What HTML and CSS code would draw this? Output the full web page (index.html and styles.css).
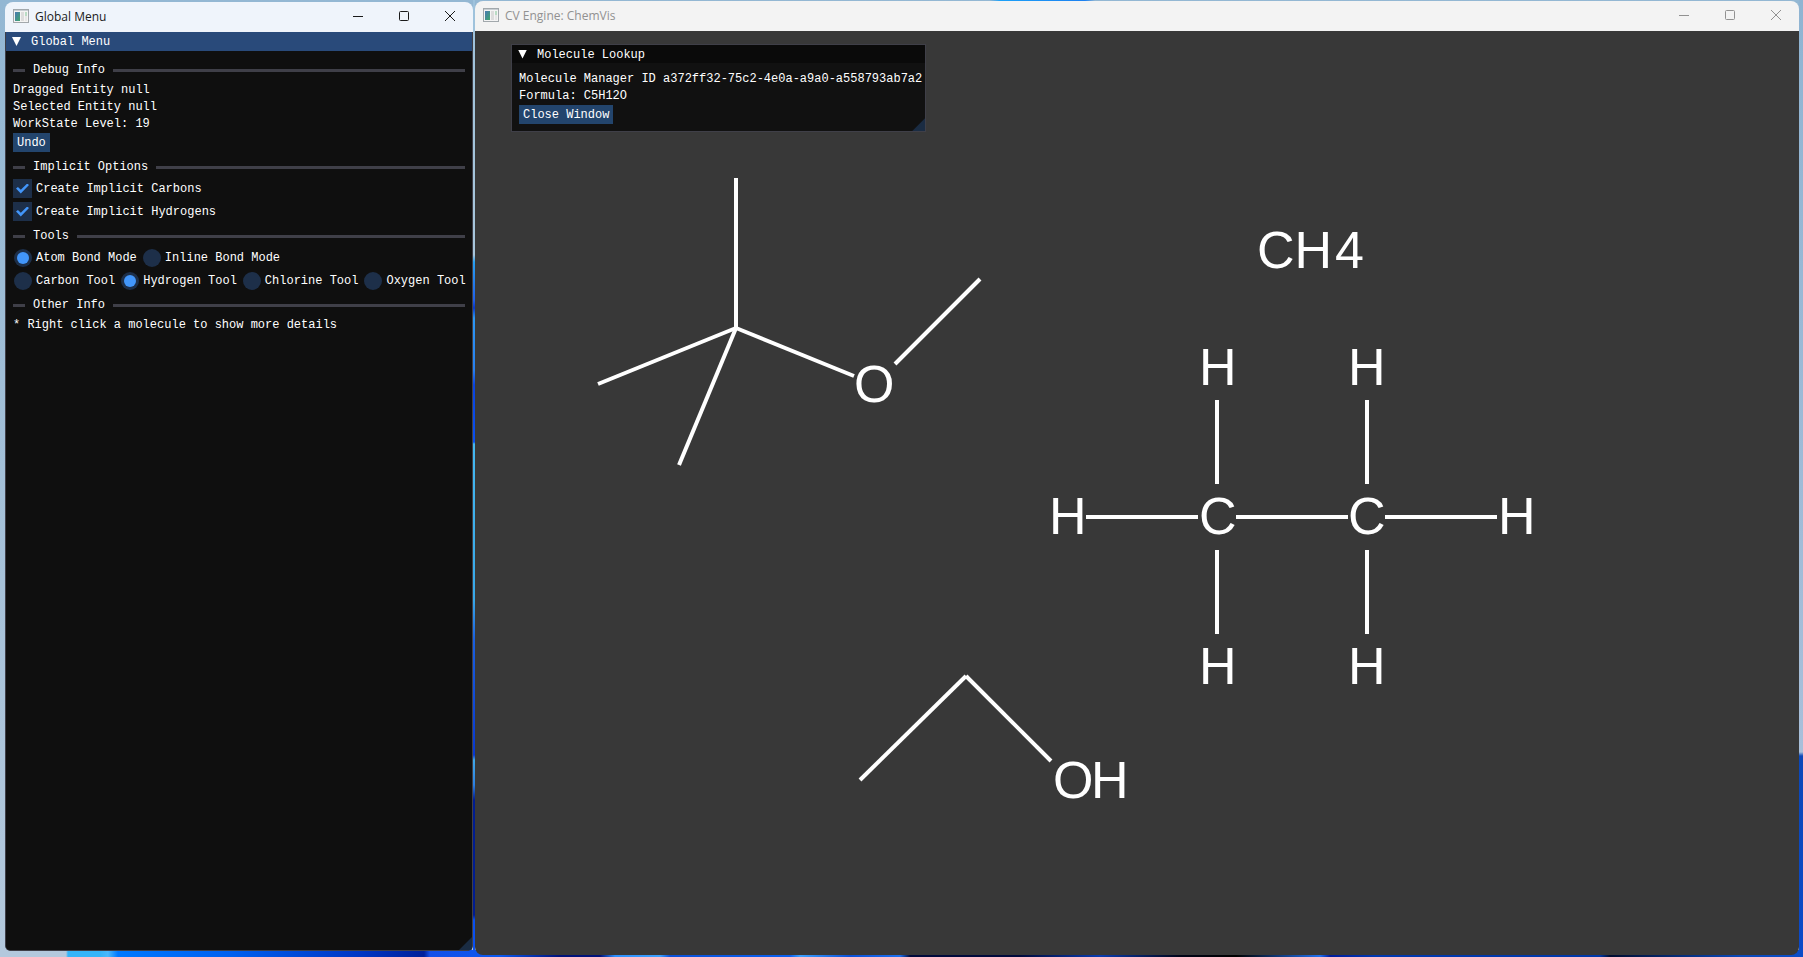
FILE: index.html
```html
<!DOCTYPE html>
<html lang="en">
<head>
<meta charset="utf-8">
<title>CV Engine: ChemVis</title>
<link rel="stylesheet" href="styles.css">
</head>
<body>
<svg width="0" height="0" class="defs" aria-hidden="true">
  <defs>
    <linearGradient id="pane" x1="0" y1="0" x2="1" y2="1">
      <stop offset="0" stop-color="#4a78b4"/><stop offset="1" stop-color="#3fa56c"/>
    </linearGradient>
    <symbol id="app" viewBox="0 0 16 14">
      <rect x="0.5" y="0.5" width="15" height="13" fill="#f4f4f4" stroke="#a2a8ac"/>
      <rect x="1" y="1" width="14" height="1" fill="#c9cfd3"/>
      <rect x="2" y="3" width="5" height="9" fill="url(#pane)"/>
      <rect x="8" y="3" width="3" height="9" fill="#dcdcdc"/>
      <rect x="12" y="3" width="2" height="4" fill="#b9dcc4"/>
      <rect x="12" y="7" width="2" height="5" fill="#e6e6e6"/>
    </symbol>
    <symbol id="min" viewBox="0 0 10 10"><path d="M0 5.5H10" stroke="currentColor"/></symbol>
    <symbol id="max" viewBox="0 0 10 10"><rect x="0.5" y="0.5" width="9" height="9" rx="1" fill="none" stroke="currentColor"/></symbol>
    <symbol id="close" viewBox="0 0 10 10"><path d="M0 0L10 10M10 0L0 10" stroke="currentColor"/></symbol>
  </defs>
</svg>

<main class="desktop">
  <section class="window window-menu">
    <header class="titlebar">
      <svg class="app-icon"><use href="#app"/></svg>
      <h1 class="caption">Global Menu</h1>
      <div class="controls">
        <button class="control" aria-label="Minimize"><svg class="glyph"><use href="#min"/></svg></button>
        <button class="control" aria-label="Maximize"><svg class="glyph"><use href="#max"/></svg></button>
        <button class="control" aria-label="Close"><svg class="glyph"><use href="#close"/></svg></button>
      </div>
    </header>
    <div class="panel panel-menu">
      <button class="panel-head"><span class="arrow"></span>Global Menu</button>
      <div class="panel-body">
        <h2 class="divider">Debug Info</h2>
        <p class="line">Dragged Entity null</p>
        <p class="line">Selected Entity null</p>
        <p class="line">WorkState Level: 19</p>
        <button class="action">Undo</button>

        <h2 class="divider">Implicit Options</h2>
        <label class="option"><input class="check" type="checkbox" checked>Create Implicit Carbons</label>
        <label class="option"><input class="check" type="checkbox" checked>Create Implicit Hydrogens</label>

        <h2 class="divider">Tools</h2>
        <div class="options">
          <label class="option"><input class="radio" type="radio" name="mode" checked>Atom Bond Mode</label>
          <label class="option"><input class="radio" type="radio" name="mode">Inline Bond Mode</label>
        </div>
        <div class="options">
          <label class="option"><input class="radio" type="radio" name="tool">Carbon Tool</label>
          <label class="option"><input class="radio" type="radio" name="tool" checked>Hydrogen Tool</label>
          <label class="option"><input class="radio" type="radio" name="tool">Chlorine Tool</label>
          <label class="option"><input class="radio" type="radio" name="tool">Oxygen Tool</label>
        </div>

        <h2 class="divider">Other Info</h2>
        <p class="line">* Right click a molecule to show more details</p>
      </div>
      <span class="grip"></span>
    </div>
  </section>

  <section class="window window-view">
    <header class="titlebar inactive">
      <svg class="app-icon"><use href="#app"/></svg>
      <h1 class="caption">CV Engine: ChemVis</h1>
      <div class="controls">
        <button class="control" aria-label="Minimize"><svg class="glyph"><use href="#min"/></svg></button>
        <button class="control" aria-label="Maximize"><svg class="glyph"><use href="#max"/></svg></button>
        <button class="control" aria-label="Close"><svg class="glyph"><use href="#close"/></svg></button>
      </div>
    </header>
    <div class="viewport">
      <svg class="scene" viewBox="0 0 1324 924">
        <g class="bonds">
          <path d="M261 147V297"/>
          <path d="M261 297L123 353"/>
          <path d="M261 297L204 434"/>
          <path d="M261 297L379 345"/>
          <path d="M420 333L505 248"/>
          <path d="M385 749L491 645"/>
          <path d="M491 645L576 730"/>
          <path d="M742 369V453"/>
          <path d="M892 369V453"/>
          <path d="M742 519V603"/>
          <path d="M892 519V603"/>
          <path d="M611 486H723"/>
          <path d="M761 486H873"/>
          <path d="M910 486H1022"/>
        </g>
        <g class="atoms">
          <text x="379" y="371">O</text>
          <text x="782" y="237">CH<tspan x="860">4</tspan></text>
          <text x="724" y="354">H</text>
          <text x="873" y="354">H</text>
          <text x="574" y="503">H</text>
          <text x="724" y="503">C</text>
          <text x="873" y="503">C</text>
          <text x="1023" y="503">H</text>
          <text x="724" y="653">H</text>
          <text x="873" y="653">H</text>
          <text x="578" y="767">O<tspan x="616">H</tspan></text>
        </g>
      </svg>
      <div class="panel panel-lookup">
        <button class="panel-head"><span class="arrow"></span>Molecule Lookup</button>
        <div class="panel-body">
          <p class="line">Molecule Manager ID a372ff32-75c2-4e0a-a9a0-a558793ab7a2</p>
          <p class="line">Formula: C5H12O</p>
          <button class="action">Close Window</button>
        </div>
        <span class="grip"></span>
      </div>
    </div>
  </section>
</main>
</body>
</html>
```
FILE: styles.css
```css
* { box-sizing: border-box; }

body {
  margin: 0;
  font: 12px/13px "Liberation Mono", monospace;
  color: #fff;
}

.defs { position: absolute; }

h1, h2, p { margin: 0; font: inherit; }

button {
  border: 0;
  font: inherit;
  color: inherit;
  cursor: pointer;
}

/* Desktop and wallpaper */
.desktop {
  display: grid;
  grid-template-columns: minmax(0, 117fr) minmax(0, 331fr);
  gap: 2px;
  min-height: 100vh;
  padding: 1px 4px 2px 5px;
  background:
    linear-gradient(90deg, #b3c8dd 0 66px, #35b4f8 68px 100px, #4ab8fc 108px, #0078ff 118px, #0060f0 230px, #0036c4 360px, #00209a 424px, #1450e8 430px, #0a58f0 500px, #00127a 560px, #00127a 600px, #2c90ff 615px, #3ca0ff 660px, #0a50d8 670px, #0a60f0 790px, #3ca0ff 800px, #0a50d8 850px, #1c70f0 900px, #000a3c 910px, #000a3c 1020px, #0a3cb0 1100px, #000418 1180px, #000 1236px, #2070f0 1320px, #001c9c 1330px, #0038b0 1375px, #0038a8 1600px, #000c30 1610px, #0a48b8 1740px, #0a4cc8) left bottom / 100% 7px no-repeat,
    linear-gradient(90deg, transparent 990px, #1ca0f8 1000px, #1c80f0 1085px, transparent 1095px) left top / 100% 1px no-repeat,
    linear-gradient(180deg, #8fb4d2 0, #a8bfda 752px, #0c48b8 756px, #0c4ac8 100%) right top / 4px 100% no-repeat,
    linear-gradient(180deg, #9ec2dc 0, #a8c6dc 255px, #28a0f0 262px, #2060e8 300px, #0838c8 308px, #2c98f4 318px, #2880f0 370px, #0a44e0 385px, #0a50f0 442px, #44b8f0 444px, #38a8e8 600px, #1a60e0 640px, #0838d0 755px, #40a8e8 760px, #2c80e0 785px, #001c90 800px, #001c90 915px, #0a50f0 920px) 473px 0 / 2px 100% no-repeat,
    linear-gradient(180deg, #93b7d3, #b4c9dd);
}

/* Native window frame */
.window {
  display: flex;
  flex-direction: column;
  overflow: hidden;
  border-radius: 8px;
}

.window-menu { margin: 1px 0 4px; border-radius: 8px 8px 5px 5px; }

.titlebar {
  display: flex;
  align-items: center;
  gap: 6px;
  height: 30px;
  padding: 0 0 2px 8px;
  background: #eff4fb;
  color: #1a1a1a;
}

.titlebar.inactive { background: #f3f3f3; color: #919191; }

.app-icon { width: 16px; height: 14px; }

.caption {
  flex: 1;
  padding-top: 2px;
  font: 12px/16px "Open Sans", "Noto Sans", sans-serif;
}

.controls { display: flex; }

.control {
  display: grid;
  place-items: center;
  width: 46px;
  height: 28px;
  padding: 0;
  background: none;
}

.glyph { width: 10px; height: 10px; }

/* Tool panels */
.panel {
  position: relative;
  display: flex;
  flex-direction: column;
  border: 1px solid #3f3f48;
  background: #0f0f0f;
}

.panel-menu { flex: 1; border-top: 0; border-radius: 0 0 5px 5px; }

.panel-head {
  display: flex;
  align-items: center;
  gap: 10px;
  height: 19px;
  padding: 2px 6px 0;
  background: #294a7a;
  text-align: left;
}

.arrow {
  width: 9px;
  height: 9px;
  margin-bottom: 2px;
  background: #fff;
  clip-path: polygon(0 0, 100% 0, 50% 100%);
}

.panel-body {
  display: flex;
  flex-direction: column;
  align-items: flex-start;
  gap: 4px;
  padding: 8px 7px;
  white-space: nowrap;
}

.line { height: 13px; line-height: 17px; }

.divider {
  display: flex;
  align-items: center;
  gap: 8px;
  align-self: stretch;
  height: 19px;
  padding-top: 3px;
}

.divider::before,
.divider::after {
  content: "";
  width: 12px;
  height: 3px;
  background: #3f3f48;
}

.divider::after { flex: 1; }

.action {
  height: 19px;
  padding: 4px 4px 2px;
  background: #23456d;
}

.options { display: flex; gap: 5px; }

.option {
  display: flex;
  gap: 4px;
  height: 19px;
  line-height: 21px;
}

.check,
.radio {
  appearance: none;
  display: grid;
  place-items: center;
  width: 19px;
  height: 19px;
  margin: 0;
  background: #1d2f49;
}

.radio {
  width: 18px;
  height: 18px;
  margin: 1px 0 0 1px;
  border-radius: 50%;
}

.check:checked::before {
  content: "";
  width: 13px;
  height: 10px;
  background: #4296fa;
  clip-path: polygon(0 50%, 15% 35%, 37% 62%, 86% 0, 100% 15%, 37% 100%);
}

.radio:checked::before {
  content: "";
  width: 12px;
  height: 12px;
  border-radius: 50%;
  background: #4296fa;
}

.grip {
  position: absolute;
  right: 0;
  bottom: 0;
  width: 13px;
  height: 13px;
  background: #1a2c43;
  clip-path: polygon(100% 0, 100% 100%, 0 100%);
}

/* Molecule view */
.viewport {
  position: relative;
  display: flex;
  flex: 1;
  background: #383838;
}

.scene { width: 100%; }

.bonds { fill: none; stroke: #fff; stroke-width: 4px; }

.atoms { fill: #fff; font: 52px "Liberation Sans", Arial, sans-serif; }

.panel-lookup {
  position: absolute;
  top: 13px;
  left: 36px;
  background: #111;
}

.panel-lookup .panel-head { height: 18px; background: #0a0a0a; }

.panel-lookup .panel-body { padding: 8px 3px 7px 7px; }
```
